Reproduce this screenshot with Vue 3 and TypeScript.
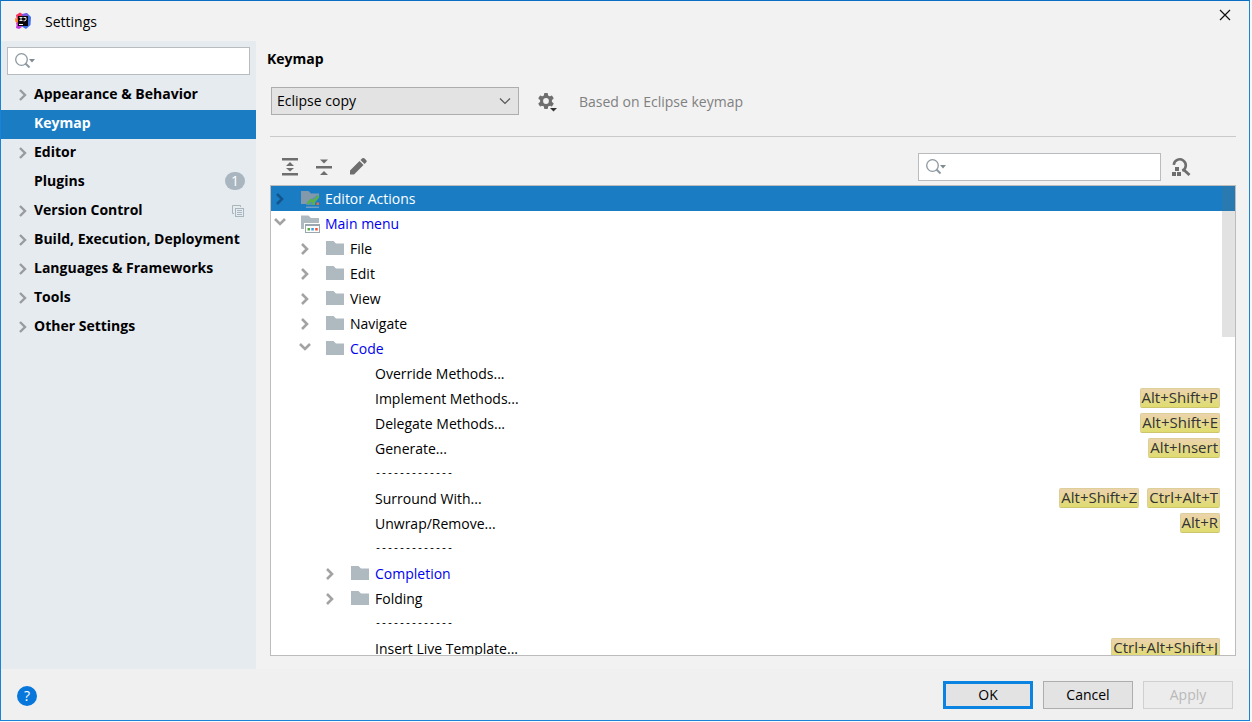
<script setup lang="ts">
import { ref } from 'vue'

interface Category {
  label: string
  expandable: boolean
  badge?: string
  perProject?: boolean
}

interface TreeRow {
  label: string
  level: number
  state?: 'open' | 'closed'
  icon?: 'folder' | 'editor' | 'menu'
  changed?: boolean
  separator?: boolean
  keys?: string[]
}

const categories: Category[] = [
  { label: 'Appearance & Behavior', expandable: true },
  { label: 'Keymap', expandable: false },
  { label: 'Editor', expandable: true },
  { label: 'Plugins', expandable: false, badge: '1' },
  { label: 'Version Control', expandable: true, perProject: true },
  { label: 'Build, Execution, Deployment', expandable: true },
  { label: 'Languages & Frameworks', expandable: true },
  { label: 'Tools', expandable: true },
  { label: 'Other Settings', expandable: true },
]

const rows: TreeRow[] = [
  { label: 'Editor Actions', level: 0, state: 'closed', icon: 'editor' },
  { label: 'Main menu', level: 0, state: 'open', icon: 'menu', changed: true },
  { label: 'File', level: 1, state: 'closed', icon: 'folder' },
  { label: 'Edit', level: 1, state: 'closed', icon: 'folder' },
  { label: 'View', level: 1, state: 'closed', icon: 'folder' },
  { label: 'Navigate', level: 1, state: 'closed', icon: 'folder' },
  { label: 'Code', level: 1, state: 'open', icon: 'folder', changed: true },
  { label: 'Override Methods...', level: 2 },
  { label: 'Implement Methods...', level: 2, keys: ['Alt+Shift+P'] },
  { label: 'Delegate Methods...', level: 2, keys: ['Alt+Shift+E'] },
  { label: 'Generate...', level: 2, keys: ['Alt+Insert'] },
  { label: '-------------', level: 2, separator: true },
  { label: 'Surround With...', level: 2, keys: ['Alt+Shift+Z', 'Ctrl+Alt+T'] },
  { label: 'Unwrap/Remove...', level: 2, keys: ['Alt+R'] },
  { label: '-------------', level: 2, separator: true },
  { label: 'Completion', level: 2, state: 'closed', icon: 'folder', changed: true },
  { label: 'Folding', level: 2, state: 'closed', icon: 'folder' },
  { label: '-------------', level: 2, separator: true },
  { label: 'Insert Live Template...', level: 2, keys: ['Ctrl+Alt+Shift+J'] },
]

const activeCategory = ref('Keymap')
const selectedRow = ref(0)
const settingsQuery = ref('')
const actionQuery = ref('')
const scheme = ref('Eclipse copy')
</script>

<template>
  <div class="desktop">
    <div class="dialog" role="dialog" aria-label="Settings">
      <header class="titlebar">
        <svg class="logo" width="18" height="18" viewBox="0 0 18 18" aria-hidden="true">
          <path d="M1 3 5 .5 9 3 8 12 6 15 1 12 2 9Z" fill="#f7365f" />
          <path d="M0 6 4 8 3 11 .5 10Z" fill="#fc801d" />
          <path d="M2 10 5 11 7 15 4 17 1 16Z" fill="#c136d8" />
          <path d="M9 2 12 1 16 5 15.500 13 11 17 6 14Z" fill="#3f6fe8" />
          <path d="M7 2 12 1 13 5 7 5Z" fill="#8157dd" />
          <rect x="3" y="4" width="10" height="10" fill="#08080c" />
          <path d="M4.500 5.500h3M6 5.500v3M4.500 8.500h3M8.500 5.500h2.500v2.500l-1 .8H8.500" fill="none" stroke="#e8e8ea" stroke-width="1" />
          <path d="M4 12.500h4" stroke="#fff" stroke-width="1" />
        </svg>
        <h1>Settings</h1>
        <button class="close" type="button" aria-label="Close">
          <svg width="12" height="12" viewBox="0 0 12 12" aria-hidden="true">
            <path d="M1 1 11 11M11 1 1 11" stroke="#111" stroke-width="1.2" />
          </svg>
        </button>
      </header>

      <div class="body">
        <aside class="sidebar">
          <label class="search">
            <svg width="22" height="18" viewBox="0 0 22 18" aria-hidden="true">
              <circle cx="7.500" cy="7.500" r="5.800" fill="none" stroke="#8d98a0" stroke-width="1.300" />
              <path d="m11.500 11.500 4 4" stroke="#8d98a0" stroke-width="2" />
              <path d="M15 7h6l-3 3.500Z" fill="#7f8b91" />
            </svg>
            <input v-model="settingsQuery" type="text" aria-label="Search settings" />
          </label>
          <nav class="categories">
            <button
              v-for="item in categories"
              :key="item.label"
              type="button"
              class="category"
              :class="{ active: item.label === activeCategory }"
              @click="activeCategory = item.label"
            >
              <span class="twisty">
                <svg v-if="item.expandable" width="8" height="12" viewBox="0 0 8 12" aria-hidden="true">
                  <path d="m1 1 5 5-5 5" fill="none" stroke="#999c9f" stroke-width="2.400" />
                </svg>
              </span>
              <span class="category-name">{{ item.label }}</span>
              <span v-if="item.badge" class="badge">{{ item.badge }}</span>
              <svg v-if="item.perProject" class="project" width="12" height="12" viewBox="0 0 12 12" aria-hidden="true">
                <path d="M2 8.500H.5v-8h8V2" fill="none" stroke="#a9b5bd" />
                <rect x="3.500" y="3.500" width="8" height="8" fill="none" stroke="#a9b5bd" />
                <path d="M5 5.500h5M5 7.500h5M5 9.500h5" stroke="#a9b5bd" />
              </svg>
            </button>
          </nav>
        </aside>

        <main class="content">
          <h2>Keymap</h2>
          <div class="scheme">
            <span class="select">
              <select v-model="scheme" aria-label="Keymap scheme">
                <option>Eclipse copy</option>
              </select>
              <svg width="12" height="8" viewBox="0 0 12 8" aria-hidden="true">
                <path d="m1 1.500 5 5 5-5" fill="none" stroke="#555" stroke-width="1.200" />
              </svg>
            </span>
            <button class="tool gear" type="button" aria-label="Scheme actions">
              <svg width="20" height="20" viewBox="0 0 20 20" aria-hidden="true">
                <g fill="#6e6e6e">
                  <rect x="6" y="1" width="4" height="16" rx="1" />
                  <rect x="6" y="1" width="4" height="16" rx="1" transform="rotate(60 8 9)" />
                  <rect x="6" y="1" width="4" height="16" rx="1" transform="rotate(120 8 9)" />
                  <circle cx="8" cy="9" r="6" />
                </g>
                <circle cx="8" cy="9" r="2.900" fill="#f2f2f2" />
                <path d="M11 15h8l-3.500 4.500Z" fill="#f2f2f2" />
                <path d="M12 16h7l-3.500 3.500Z" fill="#333" />
              </svg>
            </button>
            <span class="hint">Based on Eclipse keymap</span>
          </div>

          <div class="toolbar">
            <button class="tool" type="button" aria-label="Expand all">
              <svg width="18" height="20" viewBox="0 0 18 20" aria-hidden="true">
                <path d="M1 1h16v2.500H1zM1 16h16v2.500H1zM9 5l4 4H5zM9 14.500l4-3.500H5z" fill="#6e6e6e" />
              </svg>
            </button>
            <button class="tool" type="button" aria-label="Collapse all">
              <svg width="18" height="20" viewBox="0 0 18 20" aria-hidden="true">
                <path d="M1 9h16v2.500H1zM5 2.500h8l-4 4zM5 18h8l-4-4z" fill="#6e6e6e" />
              </svg>
            </button>
            <button class="tool" type="button" aria-label="Edit shortcut">
              <svg width="18" height="20" viewBox="0 0 18 20" aria-hidden="true">
                <path d="M1 13.500 10.500 4l4 4L5 17.500H1zM11.500 3l1.800-1.700q1-.8 2 0l2 2q.8 1 0 2L15.500 7z" fill="#6e6e6e" />
              </svg>
            </button>
            <label class="search">
              <svg width="22" height="18" viewBox="0 0 22 18" aria-hidden="true">
                <circle cx="7.500" cy="7.500" r="5.800" fill="none" stroke="#8d98a0" stroke-width="1.300" />
                <path d="m11.500 11.500 4 4" stroke="#8d98a0" stroke-width="2" />
                <path d="M15 7h6l-3 3.500Z" fill="#7f8b91" />
              </svg>
              <input v-model="actionQuery" type="text" aria-label="Search actions" />
            </label>
            <button class="tool find" type="button" aria-label="Find actions by shortcut">
              <svg width="20" height="20" viewBox="0 0 20 20" aria-hidden="true">
                <path d="M2.800 7.800a6 6 0 1 1 8.500 6" fill="none" stroke="#6e6e6e" stroke-width="2.600" />
                <path d="m12.500 12.500 6 5.500" stroke="#6e6e6e" stroke-width="2.800" />
                <path d="M4 10h4v4H4zM1 15h4v4H1zM6 15h4v4H6z" fill="#6e6e6e" />
              </svg>
            </button>
          </div>

          <div class="tree-frame">
            <ul class="tree" role="tree" aria-label="Actions">
              <li
                v-for="(row, index) in rows"
                :key="index"
                class="row"
                :class="['level-' + row.level, { selected: index === selectedRow, changed: row.changed, separator: row.separator }]"
                role="treeitem"
                :aria-selected="index === selectedRow"
                @click="selectedRow = index"
              >
                <span class="arrow">
                  <svg v-if="row.state === 'closed'" width="8" height="12" viewBox="0 0 8 12" aria-hidden="true">
                    <path d="m1 1 5 5-5 5" fill="none" stroke="currentColor" stroke-width="2.600" />
                  </svg>
                  <svg v-else-if="row.state === 'open'" class="open" width="12" height="8" viewBox="0 0 12 8" aria-hidden="true">
                    <path d="m1 1 5 5 5-5" fill="none" stroke="currentColor" stroke-width="2.600" />
                  </svg>
                </span>
                <span class="glyph">
                  <svg v-if="row.icon" width="20" height="18" viewBox="0 0 20 18" aria-hidden="true">
                    <path v-if="row.icon === 'folder'" d="M0 1h7.500l2.500 2.500h8V15H0z" fill="#aeb9c0" />
                    <g v-else-if="row.icon === 'menu'">
                      <path d="M0 .5h7.500l2.500 2.500h8V8H3v6H0z" fill="#aeb9c0" />
                      <path d="M4 9h15v9H4z" fill="#9aa7b0" />
                      <path d="M5 11h13v6H5z" fill="#fff" />
                      <path d="M6.500 13h2.500v2.500H6.500z" fill="#59a83b" />
                      <path d="M10.300 13h2.500v2.500h-2.500z" fill="#3d9fdc" />
                      <path d="M14.200 13h2.500v2.500h-2.500z" fill="#ee5535" />
                    </g>
                    <g v-else>
                      <path d="M0 1h7.500l2.500 2.500h8V6L7 14H0z" fill="#8199ab" />
                      <path d="M6 12.500 16 5l2.500 2-6 8H5z" fill="#5b8fb9" />
                      <path d="m6.500 14 3.500-4 2.500 1.500 5-5.500" fill="none" stroke="#58b43f" stroke-width="2.400" />
                      <path d="M11.500 12.500h2.500V15h-2.500z" fill="#58b43f" />
                      <path d="M15.500 12.500H18V15h-2.500z" fill="#ef673c" />
                      <path d="M5 16.500h13V18H5z" fill="#6f9fc2" />
                    </g>
                  </svg>
                </span>
                <span class="name">{{ row.label }}</span>
                <span class="keys">
                  <kbd v-for="key in row.keys" :key="key">{{ key }}</kbd>
                </span>
              </li>
            </ul>
            <div class="thumb"></div>
          </div>
        </main>
      </div>

      <footer class="footer">
        <button class="help" type="button" aria-label="Help">?</button>
        <button class="action primary" type="button">OK</button>
        <button class="action" type="button">Cancel</button>
        <button class="action" type="button" disabled>Apply</button>
      </footer>
    </div>
  </div>
</template>

<style>
html,
body {
  margin: 0;
  overflow: hidden;
}
</style>

<style scoped>
* {
  box-sizing: border-box;
}

.desktop {
  height: 100vh;
  padding: 0 2px 1px 0;
  background: #f7f7f7;
  font-family: 'Open Sans', 'Noto Sans', sans-serif;
  font-size: 14px;
  line-height: 20px;
  color: #000;
}

.dialog {
  display: flex;
  flex-direction: column;
  height: 100%;
  border: 1px solid #1883d7;
  border-top-color: #0a6fc4;
  background: #f2f2f2;
}

button,
input,
select {
  font: inherit;
  color: inherit;
}

button {
  padding: 0;
  border: 0;
  background: none;
}

svg {
  display: block;
  flex: none;
}

.titlebar {
  display: flex;
  flex: none;
  align-items: center;
  height: 40px;
  padding: 0 18px 0 14px;
}

.titlebar h1 {
  flex: 1;
  margin: 0 0 0 12px;
  padding-top: 2px;
  font-size: 14px;
  font-weight: 400;
}

.close {
  align-self: flex-start;
  padding: 8px 0;
}

.body {
  display: flex;
  flex: 1;
  min-height: 0;
}

.sidebar {
  flex: none;
  width: 255px;
  padding-top: 6px;
  background: #e6ebf0;
}

.search {
  display: flex;
  align-items: center;
  height: 28px;
  padding: 0 6px;
  border: 1px solid #b9bcbf;
  background: #fff;
}

.sidebar .search {
  margin: 0 6px;
}

.search input {
  flex: 1;
  min-width: 0;
  border: 0;
  outline: 0;
  background: transparent;
}

.categories {
  display: flex;
  flex-direction: column;
  margin-top: 6px;
}

.category {
  display: flex;
  align-items: center;
  height: 29px;
  padding: 0 11px 4px 18px;
  font-weight: 700;
  text-align: left;
  white-space: nowrap;
}

.category.active {
  background: #1a7dc4;
  color: #fff;
}

.twisty {
  flex: none;
  width: 15px;
  padding-top: 2px;
}

.category-name {
  flex: 1;
}

.badge {
  width: 20px;
  height: 18px;
  border-radius: 9px;
  background: #a9b5bf;
  color: #fff;
  font-weight: 400;
  line-height: 18px;
  text-align: center;
}

.project {
  margin: 2px 1px 0 0;
}

.content {
  display: flex;
  flex: 1;
  flex-direction: column;
  min-width: 0;
  padding: 8px 13px 13px 14px;
}

.content h2 {
  margin: 0 0 0 -3px;
  font-size: 14px;
  font-weight: 700;
}

.scheme {
  display: flex;
  align-items: center;
  margin-top: 18px;
  padding: 0 0 21px 1px;
  border-bottom: 1px solid #cacaca;
}

.select {
  display: flex;
  align-items: center;
  width: 248px;
}

.select select {
  flex: 1;
  height: 28px;
  padding: 0 5px;
  border: 1px solid #adadad;
  border-radius: 0;
  appearance: none;
  background: #e3e3e3;
}

.select svg {
  margin-left: -20px;
  margin-right: 8px;
  pointer-events: none;
}

.gear {
  margin-left: 19px;
  padding-top: 2px;
}

.hint {
  margin-left: 21px;
  padding-top: 2px;
  color: #808080;
}

.toolbar {
  display: flex;
  align-items: center;
  gap: 16px;
  padding: 16px 0 4px 11px;
}

.toolbar .search {
  width: 243px;
  margin-left: auto;
}

.find {
  margin: 0 45px 0 -6px;
}

.tree-frame {
  position: relative;
  flex: 1;
  min-height: 0;
  overflow: hidden;
  border: 1px solid #bcbcbc;
  background: #fff;
}

.tree {
  margin: 0;
  padding: 0;
  list-style: none;
}

.row {
  display: flex;
  align-items: center;
  height: 25px;
  padding-right: 15px;
  white-space: nowrap;
}

.row.level-1 {
  padding-left: 25px;
}

.row.level-2 {
  padding-left: 50px;
}

.arrow {
  display: flex;
  justify-content: center;
  flex: none;
  width: 18px;
  margin-right: 12px;
  color: #a3a3a3;
}

.arrow .open {
  margin-bottom: 3px;
}

.glyph {
  flex: none;
  width: 20px;
  margin-right: 4px;
}

.name {
  flex: 1;
}

.separator .name {
  font-family: 'Liberation Mono', monospace;
  font-size: 10px;
}

.row.changed {
  color: #0000f0;
}

.row.selected {
  background: #1a7dc4;
  color: #fff;
}

.row.selected .arrow {
  color: #12558c;
}

.keys {
  display: flex;
  gap: 8px;
  padding-bottom: 1px;
}

kbd {
  height: 20px;
  padding: 0 1px;
  border: 1px solid #dccf98;
  border-bottom-color: #cdc66c;
  border-radius: 2px;
  background: linear-gradient(#ecd3ad, #dfdc70);
  color: #333;
  font-family: inherit;
  font-size: 15px;
  line-height: 16px;
}

.thumb {
  position: absolute;
  top: 0;
  right: 0;
  width: 13px;
  height: 151px;
  background: rgba(110, 110, 110, 0.2);
}

.footer {
  display: flex;
  flex: none;
  align-items: center;
  gap: 10px;
  height: 51px;
  padding: 0 16px;
  background: #f0f0f0;
}

.help {
  width: 20px;
  height: 20px;
  margin: 2px auto 0 0;
  border-radius: 50%;
  background: #0877dc;
  color: #fff;
}

.action {
  width: 90px;
  height: 28px;
  border: 1px solid #adadad;
  background: #e3e3e3;
}

.action.primary {
  border: 3px solid #0a84e0;
}

.action:disabled {
  border-color: #d0d0d0;
  background: #ececec;
  color: #b9b9b9;
}
</style>
